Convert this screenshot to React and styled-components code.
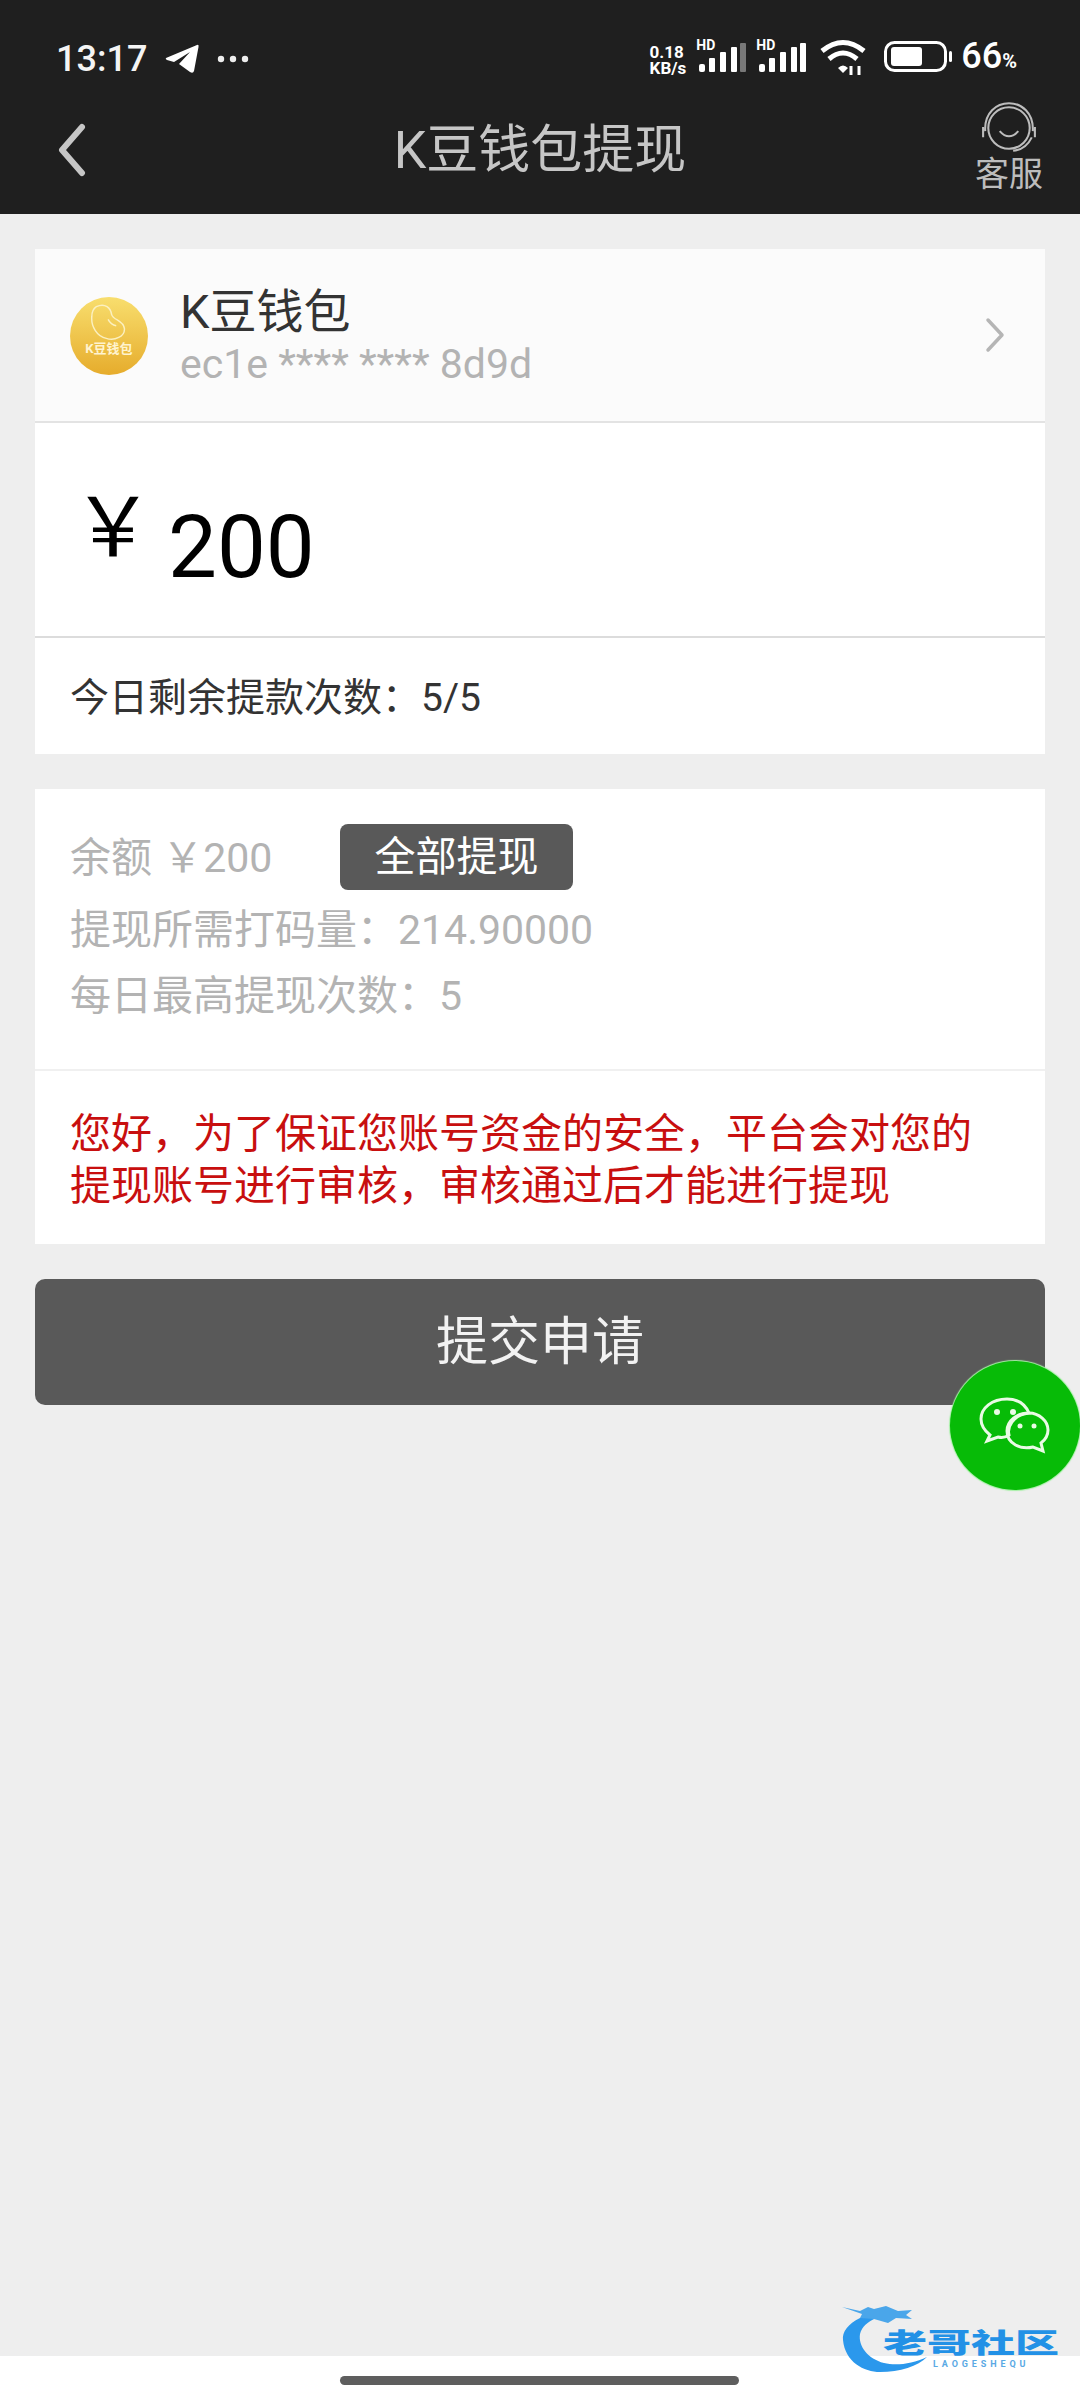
// K豆钱包提现 page
import React from "react";
import styled, { createGlobalStyle } from "styled-components";

const GlobalStyle = createGlobalStyle`
  html, body {
    margin: 0;
    padding: 0;
    background: #eeeeee;
  }
  * {
    box-sizing: border-box;
  }
`;

const FONT = `Roboto, "Noto Sans CJK SC", sans-serif`;

const Page = styled.div`
  position: relative;
  width: 1080px;
  height: 2400px;
  overflow: hidden;
  display: flex;
  flex-direction: column;
  background: #eeeeee;
  font-family: ${FONT};
`;

const Header = styled.header`
  height: 214px;
  flex: none;
  background: #1f1f1f;
  display: flex;
  flex-direction: column;
`;

const StatusBar = styled.div`
  height: 102px;
  padding: 39px 63px 0 56px;
  display: flex;
  justify-content: space-between;
  align-items: flex-start;
  color: #fff;
`;

const StatusLeft = styled.div`
  display: flex;
  align-items: center;
  gap: 18px;
`;

const Clock = styled.span`
  font-size: 36px;
  line-height: 40px;
  font-weight: 500;
  color: #f4f4f4;
`;

const StatusRight = styled.div`
  display: flex;
  align-items: center;
  height: 36px;
`;

const Speed = styled.div`
  font-size: 17px;
  line-height: 16px;
  font-weight: 700;
  margin-top: 5px;
  margin-right: 10px;
  display: flex;
  flex-direction: column;
`;

const Signal = styled.div`
  position: relative;
  width: ${(p) => p.$w}px;
  height: 32px;
  margin-right: ${(p) => p.$mr}px;
`;

const HdLabel = styled.span`
  position: absolute;
  left: 0;
  top: -3px;
  font-size: 14px;
  line-height: 14px;
  font-weight: 700;
`;

const SignalIcon = styled.svg`
  position: absolute;
  right: 0;
  bottom: 0;
`;

const WifiIcon = styled.svg`
  margin-left: 2px;
`;

const BatteryIcon = styled.svg`
  margin-left: 18px;
`;

const BatteryPct = styled.span`
  font-size: 36px;
  line-height: 36px;
  font-weight: 500;
  margin-left: 7px;
  margin-top: 3px;

  small {
    font-size: 20px;
    font-weight: 700;
  }
`;

const NavBar = styled.div`
  position: relative;
  flex: 1;
  display: flex;
  align-items: center;
  justify-content: center;
`;

const BackIcon = styled.svg`
  position: absolute;
  left: 58px;
  top: 21px;
`;

const NavTitle = styled.div`
  font-size: 52px;
  line-height: 60px;
  color: #c6c6c6;
  margin-bottom: 15px;
`;

const ServiceLink = styled.div`
  position: absolute;
  right: 36px;
  top: -2px;
  width: 70px;
  display: flex;
  flex-direction: column;
  align-items: center;
  color: #bdbdbd;
  font-size: 34px;
  line-height: 40px;
`;

const Content = styled.main`
  padding: 35px;
  display: flex;
  flex-direction: column;
  gap: 35px;
`;

const Card = styled.section`
  background: #fff;
  display: flex;
  flex-direction: column;
`;

const WalletRow = styled.div`
  height: 174px;
  padding: 0 40px 0 35px;
  background: #fbfbfb;
  border-bottom: 2px solid #e3e3e3;
  display: flex;
  align-items: center;
`;

const WalletLogo = styled.div`
  width: 78px;
  height: 78px;
  border-radius: 50%;
  flex: none;
  background: linear-gradient(#f8de6e, #e6ac2c);
  display: flex;
  flex-direction: column;
  align-items: center;
  color: #fff3cf;
  font-size: 13px;
  line-height: 14px;
  font-weight: 700;
  margin-top: 1px;
  padding-top: 7px;
  white-space: nowrap;
`;

const WalletText = styled.div`
  flex: 1;
  margin-left: 32px;
  margin-top: 2px;
`;

const WalletName = styled.div`
  font-size: 47px;
  line-height: 56px;
  margin: -3px 0 3px;
  color: #333;
`;

const WalletAddress = styled.div`
  font-size: 41px;
  line-height: 42px;
  color: #b3b3b3;
`;

const AmountRow = styled.div`
  height: 215px;
  padding-left: 37px;
  border-bottom: 2px solid #dcdcdc;
  display: flex;
  align-items: flex-start;
`;

const Currency = styled.span`
  font-size: 82px;
  line-height: 82px;
  color: #000;
  margin-top: 57px;
  font-family: "Noto Sans CJK SC", sans-serif;
`;

const Amount = styled.span`
  font-size: 87px;
  line-height: 100px;
  color: #000;
  margin-left: 14px;
  margin-top: 74px;
`;

const RemainRow = styled.div`
  height: 116px;
  padding-left: 35px;
  padding-bottom: 4px;
  display: flex;
  align-items: center;
  font-size: 39px;
  color: #333;
`;

const InfoBlock = styled.div`
  height: 282px;
  padding: 35px 35px 0;
  border-bottom: 2px solid #f0f0f0;
`;

const BalanceRow = styled.div`
  display: flex;
  align-items: center;
  height: 66px;
  margin-bottom: 7px;
`;

const InfoLine = styled.div`
  font-size: 41px;
  line-height: 66px;
  color: #b3b3b3;
`;

const BalanceText = styled(InfoLine)`
  width: 270px;
  margin-top: 2px;
  white-space: nowrap;
`;

const AllButton = styled.button`
  width: 233px;
  height: 66px;
  padding: 0;
  border: none;
  border-radius: 8px;
  background: #595959;
  color: #fff;
  font-family: inherit;
  font-size: 41px;
  line-height: 66px;
`;

const Notice = styled.div`
  padding: 37px 35px 0;
  height: 173px;
  font-size: 41px;
  line-height: 52px;
  color: #c80f0f;
`;

const SubmitButton = styled.button`
  height: 126px;
  padding: 0 0 10px;
  border: none;
  border-radius: 10px;
  background: #595959;
  color: #f2f2f2;
  font-family: inherit;
  font-size: 52px;
`;

const WeChatBubble = styled.div`
  position: absolute;
  left: 950px;
  top: 1361px;
  width: 130px;
  height: 129px;
  border-radius: 50%;
  background: #07bb07;
  box-shadow: 0 0 1px 1px #a5f0a5;
  display: flex;
  align-items: center;
  justify-content: center;
`;

const BottomBar = styled.div`
  position: absolute;
  left: 0;
  right: 0;
  bottom: 0;
  height: 44px;
  background: #fff;
`;

const HomeIndicator = styled.div`
  position: absolute;
  left: 340px;
  top: 20px;
  width: 399px;
  height: 9px;
  border-radius: 5px;
  background: #5e5e5e;
`;

const Watermark = styled.div`
  position: absolute;
  left: 840px;
  top: 2304px;
  width: 230px;
  height: 72px;
`;

const WatermarkTitle = styled.div`
  position: absolute;
  left: 43px;
  top: 22px;
  font-size: 44px;
  line-height: 30px;
  font-weight: 900;
  color: #2291e6;
  white-space: nowrap;
  font-family: "Noto Sans CJK SC", sans-serif;
  transform: scaleY(0.62);
  transform-origin: center;
`;

const WatermarkSub = styled.div`
  position: absolute;
  left: 93px;
  top: 55px;
  font-size: 9px;
  line-height: 10px;
  letter-spacing: 3.9px;
  font-weight: 700;
  color: #5aa9e4;
  white-space: nowrap;
`;

const SignalBars = ({ dim }) => (
  <SignalIcon width="48" height="30" viewBox="0 0 48 30" fill="#fff">
    <rect x="1" y="21" width="6" height="8" rx="2" />
    <rect x="11" y="15" width="6" height="14" rx="1" />
    <rect x="22" y="9" width="6" height="20" rx="1" />
    <rect x="33" y="4" width="6" height="25" rx="1" />
    <rect x="42" y="0" width="6" height="29" rx="1" opacity={dim ? 0.4 : 1} />
  </SignalIcon>
);

const App = () => {
  return (
    <>
      <GlobalStyle />
      <Page>
        <Header>
          <StatusBar>
            <StatusLeft>
              <Clock>13:17</Clock>
              {/* telegram arrow */}
              <svg width="34" height="30" viewBox="0 0 34 30" fill="#fff">
                <path d="M1 14 L32 1 Q34 0 33.5 3 L29 27 Q28 30 25 28 L14 20 L25 8 L9 18 L2 16 Q0 15 1 14 Z" />
              </svg>
              <svg width="32" height="10" viewBox="0 0 32 10" fill="#eee">
                <circle cx="4" cy="5" r="3.2" />
                <circle cx="16" cy="5" r="3.2" />
                <circle cx="28" cy="5" r="3.2" />
              </svg>
            </StatusLeft>
            <StatusRight>
              <Speed>
                <span>0.18</span>
                <span>KB/s</span>
              </Speed>
              <Signal $w={50} $mr={10}>
                <HdLabel>HD</HdLabel>
                <SignalBars dim />
              </Signal>
              <Signal $w={50} $mr={12}>
                <HdLabel>HD</HdLabel>
                <SignalBars />
              </Signal>
              {/* wifi */}
              <WifiIcon width="46" height="36" viewBox="0 0 46 36" fill="none" stroke="#fff" strokeWidth="5">
                <path d="M2 12 Q23 -5 44 12" />
                <path d="M9 20 Q23 8 37 20" />
                <path d="M18 29 L23 34 L28 29 Q23 24 18 29 Z" fill="#fff" stroke="none" />
                <path d="M31 36 V27 M39 36 V27" strokeWidth="3" />
              </WifiIcon>
              <BatteryIcon width="70" height="34" viewBox="0 0 70 34">
                <rect x="1.5" y="2.5" width="60" height="28" rx="9" fill="none" stroke="#fff" strokeWidth="3" />
                <rect x="7" y="7" width="31" height="19" rx="3" fill="#fff" />
                <rect x="65" y="11" width="3" height="11" rx="1.5" fill="#fff" />
              </BatteryIcon>
              <BatteryPct>
                66<small>%</small>
              </BatteryPct>
            </StatusRight>
          </StatusBar>
          <NavBar>
            <BackIcon width="28" height="54" viewBox="0 0 28 54" fill="none" stroke="#c6c6c6" strokeWidth="6" strokeLinecap="round" strokeLinejoin="round">
              <path d="M24 4 L4 27 L24 50" />
            </BackIcon>
            <NavTitle>K豆钱包提现</NavTitle>
            <ServiceLink>
              {/* headset */}
              <svg width="58" height="54" viewBox="0 0 56 52" fill="none" stroke="#bdbdbd" strokeWidth="2">
                <path d="M5 30 C3 -6 53 -6 51 30" />
                <circle cx="28" cy="27" r="20" />
                <path d="M19 30 Q28 40 37 30" />
                <path d="M3 26 V36 M53 26 V36 M50 36 Q44 48 32 49" />
              </svg>
              <span>客服</span>
            </ServiceLink>
          </NavBar>
        </Header>

        <Content>
          <Card>
            <WalletRow>
              <WalletLogo>
                <svg width="40" height="38" viewBox="0 0 44 42" fill="none" stroke="#fbf0c0" strokeWidth="1.6">
                  <path d="M8 3 C18 -2 24 5 25 12 C27 18 38 18 39 27 C40 36 28 41 19 38 C9 36 2 25 3 14 C3 9 5 5 8 3 Z" />
                  <path d="M21 17 Q24 23 30 24" />
                </svg>
                <span>K豆钱包</span>
              </WalletLogo>
              <WalletText>
                <WalletName>K豆钱包</WalletName>
                <WalletAddress>ec1e **** **** 8d9d</WalletAddress>
              </WalletText>
              <svg width="20" height="36" viewBox="0 0 20 36" fill="none" stroke="#b5b5b5" strokeWidth="3.5" strokeLinecap="round" strokeLinejoin="round">
                <path d="M3 3 L17 18 L3 33" />
              </svg>
            </WalletRow>
            <AmountRow>
              <Currency>￥</Currency>
              <Amount>200</Amount>
            </AmountRow>
            <RemainRow>今日剩余提款次数：5/5</RemainRow>
          </Card>

          <Card>
            <InfoBlock>
              <BalanceRow>
                <BalanceText>余额 ￥200</BalanceText>
                <AllButton>全部提现</AllButton>
              </BalanceRow>
              <InfoLine>提现所需打码量：214.90000</InfoLine>
              <InfoLine>每日最高提现次数：5</InfoLine>
            </InfoBlock>
            <Notice>
              您好，为了保证您账号资金的安全，平台会对您的
              <br />
              提现账号进行审核，审核通过后才能进行提现
            </Notice>
          </Card>

          <SubmitButton>提交申请</SubmitButton>
        </Content>

        <WeChatBubble>
          <svg width="72" height="60" viewBox="0 0 72 60" fill="none" stroke="#eafbe5" strokeWidth="3">
            <path d="M30 39 C28 32 33 19 50 17 C46 8 38 3 28 3 C13 3 2 12 2 23 C2 30 6 35 11 39 L8 45 L19 41 C23 42 26 42 30 39 Z" />
            <path d="M50 17 C60 17 69 25 69 34 C69 40 66 44 62 47 L64 55 L54 51 C42 54 28 48 28 35 C28 25 38 17 50 17 Z" />
            <circle cx="18" cy="16" r="3" fill="#eafbe5" stroke="none" />
            <circle cx="34" cy="16" r="3" fill="#eafbe5" stroke="none" />
            <circle cx="41" cy="30" r="2.5" fill="#eafbe5" stroke="none" />
            <circle cx="55" cy="30" r="2.5" fill="#eafbe5" stroke="none" />
          </svg>
        </WeChatBubble>

        <BottomBar>
          <HomeIndicator />
        </BottomBar>

        <Watermark>
          {/* dragon swoosh */}
          <svg width="100" height="72" viewBox="0 0 100 72">
            <path d="M20 14 C8 20 2 28 3 36 C5 58 24 68 40 68 C60 68 78 62 87 53 C72 60 56 62 44 59 C28 55 18 42 20 30 C22 22 28 18 36 14 Z" fill="#2b98ec" />
            <path d="M2 3 L20 7 L28 3 L34 5 L46 2 L58 7 L72 6 L66 11 L72 15 L56 14 L48 19 L34 15 L20 14 L22 10 Z" fill="#4aa6ea" />
          </svg>
          <WatermarkTitle>老哥社区</WatermarkTitle>
          <WatermarkSub>LAOGESHEQU</WatermarkSub>
        </Watermark>
      </Page>
    </>
  );
};

export default App;
